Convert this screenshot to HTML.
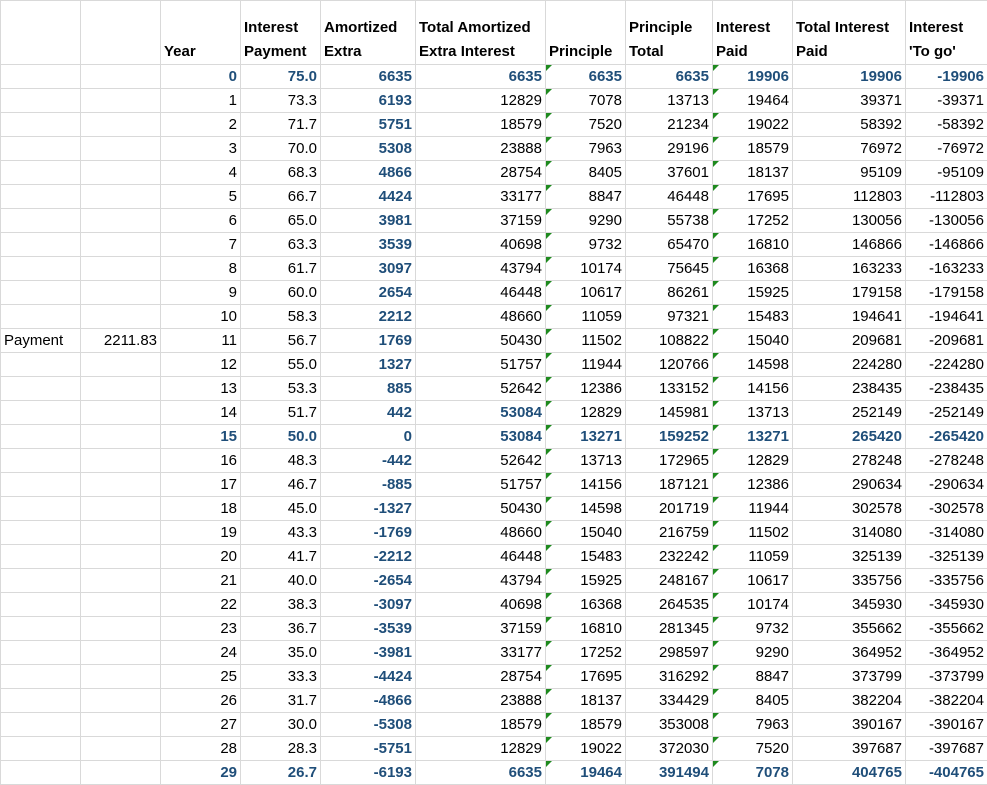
<!DOCTYPE html>
<html><head><meta charset="utf-8"><style>
body{margin:0;background:#fff;font-family:"Liberation Sans",Arial,sans-serif;font-size:15px;color:#000}
table{border-collapse:collapse;table-layout:fixed;width:987px;position:absolute;left:0;top:0}
td{border:1px solid #d9d9d9;height:23px;padding:0 3px 0 3px;text-align:right;white-space:nowrap;overflow:hidden;position:relative;line-height:23px}
tr.h td{height:63px;text-align:left;font-weight:bold;vertical-align:bottom;line-height:24px;padding-bottom:0}
td.ae,tr.b td{font-weight:bold;color:#1f4e79}
tr.b td.n{color:#1f4e79}
td.l{text-align:left}
td.bb{font-weight:bold;color:#1f4e79}
td.t::before{content:"";position:absolute;left:0;top:0;border-top:6px solid #1e8a1e;border-right:6px solid transparent}
</style></head><body>
<table>
<colgroup><col style="width:80px"><col style="width:80px"><col style="width:80px"><col style="width:80px"><col style="width:95px"><col style="width:130px"><col style="width:80px"><col style="width:87px"><col style="width:80px"><col style="width:113px"><col style="width:82px"></colgroup>
<tr class="h"><td></td><td></td><td>Year</td><td>Interest<br>Payment</td><td>Amortized<br>Extra</td><td>Total Amortized<br>Extra Interest</td><td>Principle</td><td>Principle<br>Total</td><td>Interest<br>Paid</td><td>Total Interest<br>Paid</td><td>Interest<br>'To go'</td></tr>
<tr class="b"><td></td><td></td><td>0</td><td>75.0</td><td class="ae">6635</td><td>6635</td><td class="t">6635</td><td>6635</td><td class="t">19906</td><td>19906</td><td>-19906</td></tr>
<tr><td></td><td></td><td>1</td><td>73.3</td><td class="ae">6193</td><td>12829</td><td class="t">7078</td><td>13713</td><td class="t">19464</td><td>39371</td><td>-39371</td></tr>
<tr><td></td><td></td><td>2</td><td>71.7</td><td class="ae">5751</td><td>18579</td><td class="t">7520</td><td>21234</td><td class="t">19022</td><td>58392</td><td>-58392</td></tr>
<tr><td></td><td></td><td>3</td><td>70.0</td><td class="ae">5308</td><td>23888</td><td class="t">7963</td><td>29196</td><td class="t">18579</td><td>76972</td><td>-76972</td></tr>
<tr><td></td><td></td><td>4</td><td>68.3</td><td class="ae">4866</td><td>28754</td><td class="t">8405</td><td>37601</td><td class="t">18137</td><td>95109</td><td>-95109</td></tr>
<tr><td></td><td></td><td>5</td><td>66.7</td><td class="ae">4424</td><td>33177</td><td class="t">8847</td><td>46448</td><td class="t">17695</td><td>112803</td><td>-112803</td></tr>
<tr><td></td><td></td><td>6</td><td>65.0</td><td class="ae">3981</td><td>37159</td><td class="t">9290</td><td>55738</td><td class="t">17252</td><td>130056</td><td>-130056</td></tr>
<tr><td></td><td></td><td>7</td><td>63.3</td><td class="ae">3539</td><td>40698</td><td class="t">9732</td><td>65470</td><td class="t">16810</td><td>146866</td><td>-146866</td></tr>
<tr><td></td><td></td><td>8</td><td>61.7</td><td class="ae">3097</td><td>43794</td><td class="t">10174</td><td>75645</td><td class="t">16368</td><td>163233</td><td>-163233</td></tr>
<tr><td></td><td></td><td>9</td><td>60.0</td><td class="ae">2654</td><td>46448</td><td class="t">10617</td><td>86261</td><td class="t">15925</td><td>179158</td><td>-179158</td></tr>
<tr><td></td><td></td><td>10</td><td>58.3</td><td class="ae">2212</td><td>48660</td><td class="t">11059</td><td>97321</td><td class="t">15483</td><td>194641</td><td>-194641</td></tr>
<tr><td class="l">Payment</td><td>2211.83</td><td>11</td><td>56.7</td><td class="ae">1769</td><td>50430</td><td class="t">11502</td><td>108822</td><td class="t">15040</td><td>209681</td><td>-209681</td></tr>
<tr><td></td><td></td><td>12</td><td>55.0</td><td class="ae">1327</td><td>51757</td><td class="t">11944</td><td>120766</td><td class="t">14598</td><td>224280</td><td>-224280</td></tr>
<tr><td></td><td></td><td>13</td><td>53.3</td><td class="ae">885</td><td>52642</td><td class="t">12386</td><td>133152</td><td class="t">14156</td><td>238435</td><td>-238435</td></tr>
<tr><td></td><td></td><td>14</td><td>51.7</td><td class="ae">442</td><td class="bb">53084</td><td class="t">12829</td><td>145981</td><td class="t">13713</td><td>252149</td><td>-252149</td></tr>
<tr class="b"><td></td><td></td><td>15</td><td>50.0</td><td class="ae">0</td><td>53084</td><td class="t">13271</td><td>159252</td><td class="t">13271</td><td>265420</td><td>-265420</td></tr>
<tr><td></td><td></td><td>16</td><td>48.3</td><td class="ae">-442</td><td>52642</td><td class="t">13713</td><td>172965</td><td class="t">12829</td><td>278248</td><td>-278248</td></tr>
<tr><td></td><td></td><td>17</td><td>46.7</td><td class="ae">-885</td><td>51757</td><td class="t">14156</td><td>187121</td><td class="t">12386</td><td>290634</td><td>-290634</td></tr>
<tr><td></td><td></td><td>18</td><td>45.0</td><td class="ae">-1327</td><td>50430</td><td class="t">14598</td><td>201719</td><td class="t">11944</td><td>302578</td><td>-302578</td></tr>
<tr><td></td><td></td><td>19</td><td>43.3</td><td class="ae">-1769</td><td>48660</td><td class="t">15040</td><td>216759</td><td class="t">11502</td><td>314080</td><td>-314080</td></tr>
<tr><td></td><td></td><td>20</td><td>41.7</td><td class="ae">-2212</td><td>46448</td><td class="t">15483</td><td>232242</td><td class="t">11059</td><td>325139</td><td>-325139</td></tr>
<tr><td></td><td></td><td>21</td><td>40.0</td><td class="ae">-2654</td><td>43794</td><td class="t">15925</td><td>248167</td><td class="t">10617</td><td>335756</td><td>-335756</td></tr>
<tr><td></td><td></td><td>22</td><td>38.3</td><td class="ae">-3097</td><td>40698</td><td class="t">16368</td><td>264535</td><td class="t">10174</td><td>345930</td><td>-345930</td></tr>
<tr><td></td><td></td><td>23</td><td>36.7</td><td class="ae">-3539</td><td>37159</td><td class="t">16810</td><td>281345</td><td class="t">9732</td><td>355662</td><td>-355662</td></tr>
<tr><td></td><td></td><td>24</td><td>35.0</td><td class="ae">-3981</td><td>33177</td><td class="t">17252</td><td>298597</td><td class="t">9290</td><td>364952</td><td>-364952</td></tr>
<tr><td></td><td></td><td>25</td><td>33.3</td><td class="ae">-4424</td><td>28754</td><td class="t">17695</td><td>316292</td><td class="t">8847</td><td>373799</td><td>-373799</td></tr>
<tr><td></td><td></td><td>26</td><td>31.7</td><td class="ae">-4866</td><td>23888</td><td class="t">18137</td><td>334429</td><td class="t">8405</td><td>382204</td><td>-382204</td></tr>
<tr><td></td><td></td><td>27</td><td>30.0</td><td class="ae">-5308</td><td>18579</td><td class="t">18579</td><td>353008</td><td class="t">7963</td><td>390167</td><td>-390167</td></tr>
<tr><td></td><td></td><td>28</td><td>28.3</td><td class="ae">-5751</td><td>12829</td><td class="t">19022</td><td>372030</td><td class="t">7520</td><td>397687</td><td>-397687</td></tr>
<tr class="b"><td></td><td></td><td>29</td><td>26.7</td><td class="ae">-6193</td><td>6635</td><td class="t">19464</td><td>391494</td><td class="t">7078</td><td>404765</td><td>-404765</td></tr>
</table>
</body></html>
